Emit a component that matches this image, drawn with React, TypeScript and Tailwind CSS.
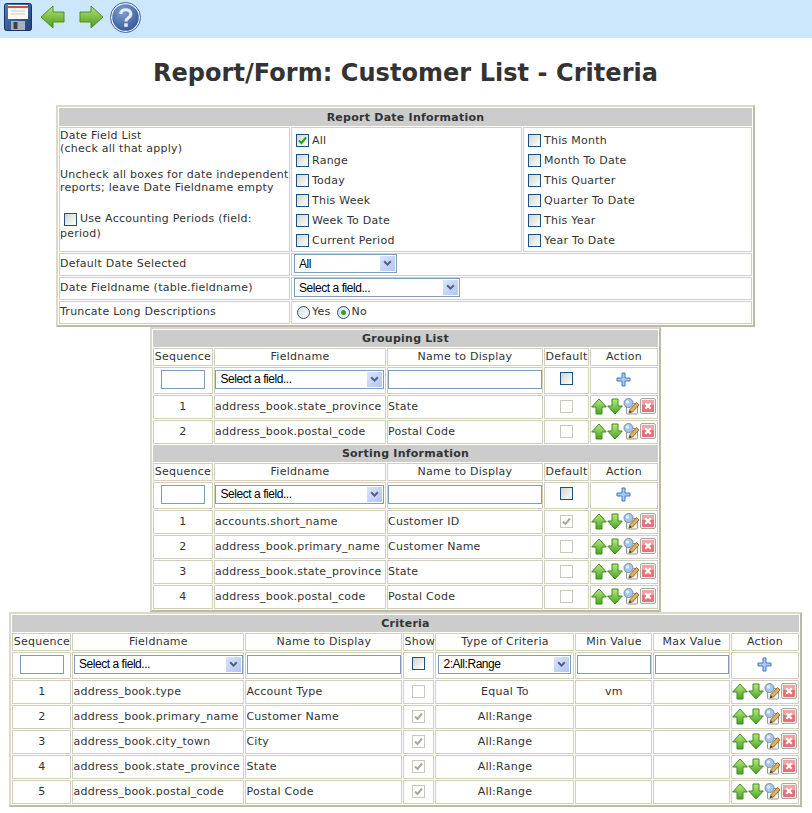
import React from "react";

const Box = ({ checked = false, disabled = false }: { checked?: boolean; disabled?: boolean }) => (
  <span
    className={
      "relative inline-block w-[13px] h-[13px] shrink-0 align-middle border " +
      (disabled
        ? "border-[#cac8bb] bg-white"
        : "border-[#1c5180] bg-gradient-to-br from-[#d4d4ce] to-white")
    }
  >
    {checked && (
      <svg viewBox="0 0 11 11" className="absolute left-0 top-0 w-[11px] h-[11px]">
        <path d="M2 5.5 L4.5 8 L9 2.5" fill="none" stroke={disabled ? "#a9a89f" : "#21a121"} strokeWidth="2" />
      </svg>
    )}
  </span>
);

const Radio = ({ checked = false }: { checked?: boolean }) => (
  <span className="relative inline-flex items-center justify-center w-[13px] h-[13px] rounded-full border border-[#1c5180] bg-gradient-to-br from-[#dcdcd7] to-white align-middle">
    {checked && <span className="w-[5px] h-[5px] rounded-full bg-[#2fa32f]" />}
  </span>
);

const SelectBox = ({ w, label }: { w: string; label: string }) => (
  <div className={"relative flex items-center h-[19px] border border-[#7f9db9] bg-white " + w}>
    <span className="pl-[4px] font-['Liberation_Sans',sans-serif] text-[12px] tracking-[-0.45px] text-black">{label}</span>
    <span className="absolute right-[1px] top-[1px] bottom-[1px] w-[15px] bg-gradient-to-br from-[#dbe5fb] to-[#b2c5ef] flex items-center justify-center">
      <svg viewBox="0 0 9 7" className="w-[9px] h-[7px]">
        <path d="M1.2 1.2 L4.5 4.6 L7.8 1.2" fill="none" stroke="#4d6185" strokeWidth="2" />
      </svg>
    </span>
  </div>
);

const TextBox = ({ w }: { w: string }) => <div className={"h-[19px] border border-[#7f9db9] bg-white mx-auto " + w} />;

const Up = ({ flip = false, id }: { flip?: boolean; id: string }) => (
  <svg viewBox="0 0 16 17" className="w-[16px] h-[17px] shrink-0">
    <defs>
      <linearGradient id={id} x1="0" y1="0" x2="0" y2="1">
        <stop offset="0" stopColor="#bdea7c" />
        <stop offset="1" stopColor="#46a422" />
      </linearGradient>
    </defs>
    <path
      d={flip ? "M5 1 H11 V8 H15.3 L8 16 L0.7 8 H5 Z" : "M8 1 L15.3 9 H11 V16 H5 V9 H0.7 Z"}
      fill={`url(#${id})`}
      stroke="#3b8a22"
      strokeWidth="1"
    />
  </svg>
);

const Edit = () => (
  <svg viewBox="0 0 17 17" className="w-[17px] h-[17px] shrink-0">
    <rect x="3.5" y="5.5" width="11" height="10.5" rx="1" fill="#f1f1ed" stroke="#9a9a94" />
    <circle cx="5.5" cy="5" r="4.5" fill="#a9c6e6" stroke="#7690ad" />
    <circle cx="4.5" cy="4" r="1.7" fill="#e4eefa" />
    <path d="M6 15 L7 11.5 L13.5 4.5 L16 7 L9.5 14 Z" fill="#e0b060" stroke="#7a5a1e" strokeWidth="0.8" />
    <path d="M6 15 L7 12.5 L8.5 14 Z" fill="#333" />
  </svg>
);

const Del = () => (
  <svg viewBox="0 0 16 16" className="w-[16px] h-[16px] shrink-0">
    <rect x="0.5" y="0.5" width="15" height="15" rx="1.5" fill="#f2f2ee" stroke="#a8a8a2" />
    <rect x="2" y="2" width="12" height="12" rx="1" fill="#e6707a" />
    <rect x="2" y="2" width="12" height="5" rx="1" fill="#f0a2a6" />
    <path d="M5.3 5.3 L10.7 10.7 M10.7 5.3 L5.3 10.7" stroke="#fff" strokeWidth="2.2" />
  </svg>
);

const Plus = () => (
  <svg viewBox="0 0 15 15" className="w-[15px] h-[15px] mx-auto">
    <path d="M6 1 H9 V6 H14 V9 H9 V14 H6 V9 H1 V6 H6 Z" fill="#a9c9f0" stroke="#3f78c4" strokeWidth="1" />
  </svg>
);

let uid = 0;
const Actions = () => {
  const a = `g${uid++}`;
  return (
    <div className="flex items-center justify-center">
      <Up id={a + "u"} />
      <Up id={a + "d"} flip />
      <Edit />
      <Del />
    </div>
  );
};

const td = "border border-[#d2cfbd] p-0";
const tdIn = td + " pb-[3px]";
const Band = ({ span, text, h = "h-[17px]" }: { span: number; text: string; h?: string }) => (
  <tr className={h}>
    <td colSpan={span} className="bg-[#cccccc] border border-[#cccccc] p-0 text-center font-bold leading-[15px]">
      {text}
    </td>
  </tr>
);

const Heads = ({ names }: { names: string[] }) => (
  <tr className="h-[18px]">
    {names.map((n) => (
      <td key={n} className={td + " text-center leading-[14px]"}>
        {n}
      </td>
    ))}
  </tr>
);

const GridRow = ({
  seq,
  field,
  name,
  checked,
}: {
  seq: number;
  field: string;
  name: string;
  checked?: boolean;
}) => (
  <tr className="h-[24px]">
    <td className={td + " text-center"}>{seq}</td>
    <td className={td}>{field}</td>
    <td className={td}>{name}</td>
    <td className={td + " text-center"}>
      <Box disabled checked={checked} />
    </td>
    <td className={td + " pb-[2px]"}>
      <Actions />
    </td>
  </tr>
);

const InputRow = () => (
  <tr className="h-[27px]">
    <td className={tdIn}>
      <TextBox w="w-[44px]" />
    </td>
    <td className={tdIn}>
      <SelectBox w="w-[169px] mx-auto" label="Select a field..." />
    </td>
    <td className={tdIn}>
      <TextBox w="w-[154px]" />
    </td>
    <td className={tdIn + " text-center"}>
      <Box />
    </td>
    <td className={tdIn}>
      <Plus />
    </td>
  </tr>
);

const tableCls =
  "mx-auto table-fixed border-separate border-spacing-[1px] border-2 border-[#dcd9c8] border-r-[#bdbaa8] border-b-[#bdbaa8] bg-white";

const Check = ({ label, checked }: { label: string; checked?: boolean }) => (
  <div className="flex items-center h-[20px] gap-[3px] pl-[4px]">
    <span className="flex mb-[2px]">
      <Box checked={checked} />
    </span>
    <span>{label}</span>
  </div>
);

const groupHeads = ["Sequence", "Fieldname", "Name to Display", "Default", "Action"];
const critHeads = ["Sequence", "Fieldname", "Name to Display", "Show", "Type of Criteria", "Min Value", "Max Value", "Action"];

const crit = [
  [1, "address_book.type", "Account Type", "Equal To", "vm"],
  [2, "address_book.primary_name", "Customer Name", "All:Range", ""],
  [3, "address_book.city_town", "City", "All:Range", ""],
  [4, "address_book.state_province", "State", "All:Range", ""],
  [5, "address_book.postal_code", "Postal Code", "All:Range", ""],
] as const;

export default function App() {
  uid = 0;
  return (
    <div className="min-h-[813px] bg-white text-[#333333] text-[11px] tracking-[0.25px] font-['DejaVu_Sans',Verdana,sans-serif]">
      <div className="h-[38px] bg-[#cce6fb] flex items-center pl-[4px] pb-[4px] gap-[6px]">
        <svg viewBox="0 0 28 28" className="w-[28px] h-[28px]">
          <defs>
            <linearGradient id="fl" x1="0" y1="0" x2="1" y2="1">
              <stop offset="0" stopColor="#4f7fc0" />
              <stop offset="1" stopColor="#223f78" />
            </linearGradient>
          </defs>
          <rect x="0.5" y="0.5" width="27" height="27" rx="2" fill="url(#fl)" stroke="#1d3160" />
          <rect x="4" y="2" width="20" height="14" fill="#fbfbf4" />
          <rect x="4" y="3" width="20" height="2" fill="#e2473a" />
          <path d="M7 8 H21 M7 11 H21" stroke="#c9c9c2" strokeWidth="1" />
          <rect x="7" y="18" width="14" height="9" fill="#a9b0b8" />
          <rect x="9.5" y="19" width="4" height="7" fill="#3a4250" />
        </svg>
        <svg viewBox="0 0 26 28" className="w-[26px] h-[28px] ml-[2px]">
          <defs>
            <linearGradient id="ar" x1="0" y1="0" x2="0" y2="1">
              <stop offset="0" stopColor="#b5e27a" />
              <stop offset="1" stopColor="#4c9a18" />
            </linearGradient>
          </defs>
          <path d="M1 14 L13 3 V9 H24 V19 H13 V25 Z" fill="url(#ar)" stroke="#4f8f22" />
        </svg>
        <svg viewBox="0 0 26 28" className="w-[26px] h-[28px] ml-[6px]">
          <path d="M25 14 L13 3 V9 H2 V19 H13 V25 Z" fill="url(#ar)" stroke="#4f8f22" />
        </svg>
        <svg viewBox="0 0 32 32" className="w-[31px] h-[31px]">
          <defs>
            <radialGradient id="hp" cx="0.4" cy="0.3" r="0.8">
              <stop offset="0" stopColor="#7f9fd6" />
              <stop offset="1" stopColor="#2c4f92" />
            </radialGradient>
          </defs>
          <circle cx="16" cy="16" r="14.5" fill="url(#hp)" stroke="#f2f6fb" strokeWidth="1.6" />
          <circle cx="16" cy="16" r="15.5" fill="none" stroke="#3d5f9d" strokeWidth="1" />
          <path d="M11 12.5 C11 6.5 21.5 6.5 21.5 12.5 C21.5 16.5 16.5 16 16.5 20" fill="none" stroke="#e8edf5" strokeWidth="3.2" />
          <rect x="14.7" y="22" width="3.6" height="3.6" fill="#e8edf5" />
        </svg>
      </div>

      <div className="w-[811px]">
        <h1 className="h-[67px] pt-[2px] flex items-center justify-center text-[24px] font-bold leading-none tracking-[0.05px]">
          Report/Form: Customer List - Criteria
        </h1>

        <table className={tableCls + " w-[699px]"}>
          <colgroup>
            <col className="w-[231px]" />
            <col className="w-[231px]" />
            <col className="w-[229px]" />
          </colgroup>
          <tbody>
            <Band span={3} text="Report Date Information" h="h-[18px]" />
            <tr className="h-[124px]">
              <td className={td + " align-top leading-[13px] pt-[1px]"}>
                Date Field List
                <br />
                (check all that apply)
                <br />
                <br />
                Uncheck all boxes for date independent
                <br />
                reports; leave Date Fieldname empty
                <br />
                <div className="mt-[17px] leading-[15px]">
                  <span className="ml-[4px] mr-[3px]">
                    <Box />
                  </span>
                  Use Accounting Periods (field: period)
                </div>
              </td>
              <td className={td + " align-top pt-[3px]"}>
                <Check label="All" checked />
                <Check label="Range" />
                <Check label="Today" />
                <Check label="This Week" />
                <Check label="Week To Date" />
                <Check label="Current Period" />
              </td>
              <td className={td + " align-top pt-[3px]"}>
                <Check label="This Month" />
                <Check label="Month To Date" />
                <Check label="This Quarter" />
                <Check label="Quarter To Date" />
                <Check label="This Year" />
                <Check label="Year To Date" />
              </td>
            </tr>
            <tr className="h-[23px]">
              <td className={td}>Default Date Selected</td>
              <td colSpan={2} className={td + " pl-[2px] pb-[2px]"}>
                <SelectBox w="w-[103px]" label="All" />
              </td>
            </tr>
            <tr className="h-[23px]">
              <td className={td}>Date Fieldname (table.fieldname)</td>
              <td colSpan={2} className={td + " pl-[2px] pb-[2px]"}>
                <SelectBox w="w-[166px]" label="Select a field..." />
              </td>
            </tr>
            <tr className="h-[23px]">
              <td className={td}>Truncate Long Descriptions</td>
              <td colSpan={2} className={td + " pl-[5px]"}>
                <span className="flex items-center">
                  <Radio />
                  <span className="ml-[2px] mr-[6px]">Yes</span>
                  <Radio checked />
                  <span className="ml-[2px]">No</span>
                </span>
              </td>
            </tr>
          </tbody>
        </table>

        <table className={tableCls + " w-[511px]"}>
          <colgroup>
            <col className="w-[60px]" />
            <col className="w-[172px]" />
            <col className="w-[156px]" />
            <col className="w-[45px]" />
            <col className="w-[68px]" />
          </colgroup>
          <tbody>
            <Band span={5} text="Grouping List" />
            <Heads names={groupHeads} />
            <InputRow />
            <GridRow seq={1} field="address_book.state_province" name="State" />
            <GridRow seq={2} field="address_book.postal_code" name="Postal Code" />
            <Band span={5} text="Sorting Information" />
            <Heads names={groupHeads} />
            <InputRow />
            <GridRow seq={1} field="accounts.short_name" name="Customer ID" checked />
            <GridRow seq={2} field="address_book.primary_name" name="Customer Name" />
            <GridRow seq={3} field="address_book.state_province" name="State" />
            <GridRow seq={4} field="address_book.postal_code" name="Postal Code" />
          </tbody>
        </table>

        <table className={tableCls + " w-[792px]"}>
          <colgroup>
            <col className="w-[59px]" />
            <col className="w-[172px]" />
            <col className="w-[157px]" />
            <col className="w-[31px]" />
            <col className="w-[139px]" />
            <col className="w-[77px]" />
            <col className="w-[77px]" />
            <col className="w-[67px]" />
          </colgroup>
          <tbody>
            <Band span={8} text="Criteria" />
            <Heads names={critHeads} />
            <tr className="h-[27px]">
              <td className={tdIn}>
                <TextBox w="w-[44px]" />
              </td>
              <td className={tdIn}>
                <SelectBox w="w-[169px] mx-auto" label="Select a field..." />
              </td>
              <td className={tdIn}>
                <TextBox w="w-[154px]" />
              </td>
              <td className={tdIn + " text-center"}>
                <Box />
              </td>
              <td className={tdIn}>
                <SelectBox w="w-[133px] mx-auto" label="2:All:Range" />
              </td>
              <td className={tdIn}>
                <TextBox w="w-[74px]" />
              </td>
              <td className={tdIn}>
                <TextBox w="w-[74px]" />
              </td>
              <td className={tdIn}>
                <Plus />
              </td>
            </tr>
            {crit.map((r, i) => (
              <tr key={r[0]} className="h-[24px]">
                <td className={td + " text-center"}>{r[0]}</td>
                <td className={td}>{r[1]}</td>
                <td className={td}>{r[2]}</td>
                <td className={td + " text-center"}>
                  <Box disabled checked={i > 0} />
                </td>
                <td className={td + " text-center"}>{r[3]}</td>
                <td className={td + " text-center"}>{r[4]}</td>
                <td className={td} />
                <td className={td + " pb-[2px]"}>
                  <Actions />
                </td>
              </tr>
            ))}
          </tbody>
        </table>
      </div>
    </div>
  );
}
